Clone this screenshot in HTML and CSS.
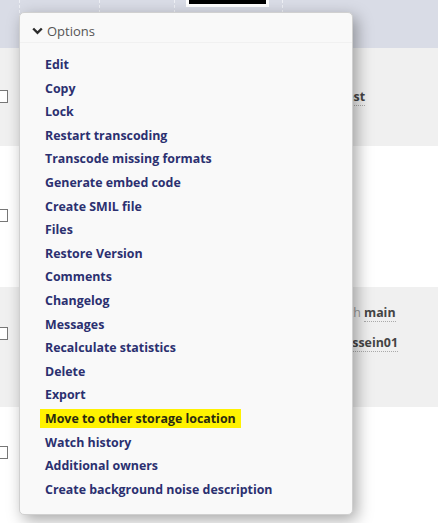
FILE: index.html
```html
<!DOCTYPE html>
<html>
<head>
<meta charset="utf-8">
<link rel="stylesheet" href="styles.css">
</head>
<body>
<div class="page">
  <div class="thead">
    <div class="th c1"></div>
    <div class="th c2"></div>
    <div class="th c3"></div>
    <div class="th c4"><div class="thumb"><div class="thumb-inner"></div></div></div>
    <div class="th c5"></div>
  </div>
  <div class="row row-a r1">
    <div class="check"><span class="box"></span></div>
    <div class="info"><span class="link">Test</span></div>
  </div>
  <div class="row row-b r2">
    <div class="check"><span class="box"></span></div>
    <div class="info"></div>
  </div>
  <div class="row row-a r3">
    <div class="check"><span class="box"></span></div>
    <div class="info stack">
      <span class="line"><span class="muted">with</span> <span class="link">main</span></span>
      <span class="line"><span class="link">hussein01</span></span>
    </div>
  </div>
  <div class="row row-b r4">
    <div class="check"><span class="box"></span></div>
    <div class="info"></div>
  </div>

  <div class="menu">
    <div class="menu-head">
      <svg class="chev" width="11" height="8" viewBox="0 0 11 8"><path d="M1.2 1.5 L5.5 5.8 L9.8 1.5" fill="none" stroke="#2b2b2b" stroke-width="2.4"/></svg>
      <span>Options</span>
    </div>
    <ul class="menu-list">
      <li>Edit</li>
      <li>Copy</li>
      <li>Lock</li>
      <li>Restart transcoding</li>
      <li>Transcode missing formats</li>
      <li>Generate embed code</li>
      <li>Create SMIL file</li>
      <li>Files</li>
      <li>Restore Version</li>
      <li>Comments</li>
      <li>Changelog</li>
      <li>Messages</li>
      <li>Recalculate statistics</li>
      <li>Delete</li>
      <li>Export</li>
      <li><span class="mark">Move to other storage location</span></li>
      <li>Watch history</li>
      <li>Additional owners</li>
      <li>Create background noise description</li>
    </ul>
  </div>
</div>
</body>
</html>
```
FILE: styles.css
```css
html, body {
  margin: 0;
  padding: 0;
  background: #ffffff;
  font-family: "Open Sans", "Noto Sans", sans-serif;
  overflow: hidden;
}

.page {
  position: relative;
  width: 438px;
  height: 523px;
  overflow: hidden;
}

.thead {
  display: grid;
  grid-template-columns: 20px 80px 75px 108px 1fr;
  height: 48px;
  background: #d9dce6;
}

.th {
  border-right: 1px dashed #eef0f5;
}
.th.c5 { border-right: none; }

.c4 {
  display: flex;
  justify-content: flex-start;
  padding-left: 11px;
}

.thumb {
  width: 77px;
  height: 5px;
  margin-top: -1px;
  padding: 0 3px 3px 3px;
  background: #ffffff;
}
.thumb-inner {
  width: 100%;
  height: 100%;
  background: #000000;
}

.row {
  display: grid;
  grid-template-columns: 330px 1fr;
}
.row-a { background: #f0f0f0; }
.row-b { background: #ffffff; }

.r1 { height: 98px; }
.r2 { height: 141px; }
.r3 { height: 120px; }
.r4 { height: 120px; }

.check {
  display: flex;
  align-items: flex-start;
}
.r1 .check { padding-top: 42px; }
.r2 .check { padding-top: 63px; }
.r3 .check { padding-top: 40px; }
.r4 .check { padding-top: 39px; }

.box {
  display: block;
  width: 11px;
  height: 11px;
  margin-left: -5px;
  background: #ffffff;
  border: 1px solid #777777;
}

.info {
  display: flex;
  align-items: center;
  padding-left: 9px;
  font-size: 12.4px;
}
.stack {
  flex-direction: column;
  align-items: flex-start;
  justify-content: flex-start;
  gap: 12px;
  padding-top: 17px;
  padding-left: 6px;
}
.line { line-height: 18px; }

.link {
  font-weight: 700;
  color: #444444;
  border-bottom: 1px dotted #aaaaaa;
}
.muted {
  color: #999999;
}

.menu {
  position: absolute;
  left: 19px;
  top: 12px;
  width: 334px;
  height: 503px;
  background: #f9f9f9;
  border: 1px solid #d0d0d0;
  border-radius: 5px;
  box-shadow: 4px 5px 16px rgba(0, 0, 0, 0.35);
  box-sizing: border-box;
}

.menu-head {
  display: flex;
  align-items: center;
  gap: 4px;
  height: 30px;
  padding: 7px 0 0 12px;
  font-size: 13px;
  color: #555555;
  border-bottom: 1px solid #f1f1f1;
  box-sizing: border-box;
}

.menu-list {
  list-style: none;
  margin: 0;
  padding: 10px 0 0 25px;
}
.menu-list li {
  font-size: 12.4px;
  font-weight: 700;
  line-height: 23.6px;
  color: #2b3070;
  white-space: nowrap;
}

.mark {
  background: #fff200;
  color: #2a2a10;
  padding: 1px 5px;
  margin-left: -5px;
}
```
